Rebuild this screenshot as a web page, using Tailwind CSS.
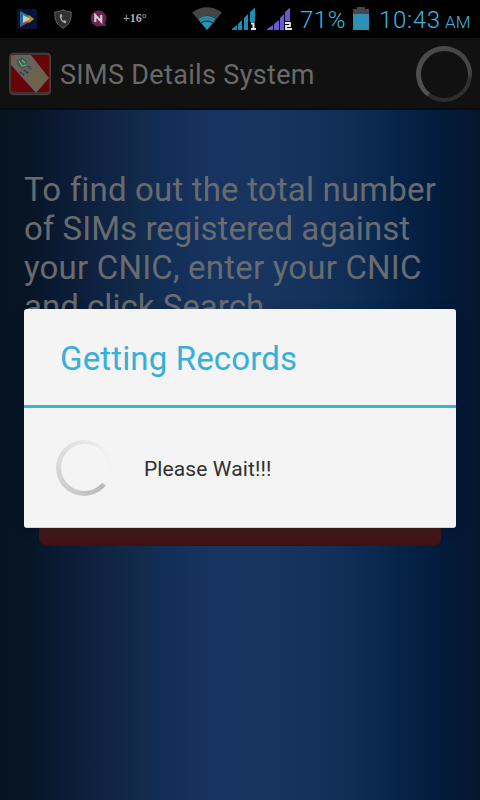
<!DOCTYPE html>
<html lang="en">
<head>
<meta charset="utf-8">
<title>SIMS Details System</title>
<script src="https://cdn.jsdelivr.net/npm/@tailwindcss/browser@4"></script>
</head>
<body class="m-0 bg-black">
<div class="relative flex h-[800px] w-[480px] flex-col overflow-hidden bg-black font-[Roboto,sans-serif]">
  <header class="flex h-[38px] shrink-0 items-start whitespace-nowrap bg-black text-[#3db7e2]">
    <svg class="ml-[17px] mt-[9px] h-[20px] w-[20px] shrink-0" viewBox="0 0 20 20"><rect width="20" height="20" rx="1" fill="#071438"/><path d="M3 2v16l14-8z" fill="#246a9c"/><path d="M3 2l11 6-5 2z" fill="#307c80"/><path d="M3 18l11-6-5-3z" fill="#a64531"/><path d="M12 6l5 4-5 4-4-4z" fill="#b18a26"/><path d="M6 6v8l7-4z" fill="#c4cacb"/></svg>
    <svg class="ml-[17px] mt-[9px] h-[20px] w-[18px] shrink-0" viewBox="0 0 18 20"><path d="M9 .7C7 2 4 3 .8 3c0 7 .8 12 8.200 16.200C16.400 15 17.200 10 17.200 3 14 3 11 2 9 .7z" fill="#303030" stroke="#666" stroke-width="1"/><path d="M6 5.500c-1 4 2 8 5.500 9l1-2-2-1.500-1 .8C8 10.500 7.500 9.500 7.500 8.200l1-.6L7.500 5z" fill="#aaa"/></svg>
    <svg class="ml-[18px] mt-[10px] h-[18px] w-[18px] shrink-0" viewBox="0 0 18 18"><path d="M8.500.5a8 8 0 1 0 3 15.500h5l-1.500-3A8 8 0 0 0 8.500.5z" fill="#6b2350"/><path d="M5.300 12V5.200L11.200 11.500V5" fill="none" stroke="#ccc" stroke-width="2.200"/></svg>
    <span class="ml-[15px] mt-[11px] w-[24px] shrink-0 font-['Liberation_Serif',serif] text-[12px] font-bold leading-[14px] text-[#aaa]">+16°</span>
    <svg class="ml-[45px] mt-[7px] h-[24px] w-[30px] shrink-0" viewBox="0 0 30 24"><path d="M0 5.500Q15-5 30 5.500L15 23z" fill="#454545"/><path d="M7.500 14Q15 8 22.500 14L15 23z" fill="#2b91b5"/><path d="M6 12.500Q15 6 24 12.500M8.800 16.200Q15 11.500 21.200 16.200" fill="none" stroke="#15394a" stroke-width="1.200"/><path d="M7 12.800Q15 7 23 12.800" fill="none" stroke="#2b91b5" stroke-width="1.800"/></svg>
    <svg class="ml-[9px] mt-[7px] h-[24px] w-[26px] shrink-0" viewBox="0 0 26 24"><path d="M1 23v-1l5-4v5zM7 23v-6l4-4v10zM13 23V11l4-4v16zM19 23V5l5-4.500V23z" fill="#198eb9"/><rect x="19" y="15" width="7" height="9" fill="#000"/><path d="M20 16.500h2.500V22M20 22h5" fill="none" stroke="#e4e4e4" stroke-width="2"/></svg>
    <svg class="ml-[10px] mt-[7px] h-[24px] w-[26px] shrink-0" viewBox="0 0 26 24"><path d="M0 23v-1l6-4v5zM7 23v-6l5-4v10zM13 23V11l4-4v16zM18 23V5l5-4.500V23z" fill="#6858d2"/><rect x="17" y="14" width="8" height="10" fill="#000"/><path d="M18 16h5v3h-4v3h6" fill="none" stroke="#e4e4e4" stroke-width="1.800"/></svg>
    <span class="ml-[7px] mt-[5px] w-[48px] shrink-0 text-[24px] font-light leading-[30px] tracking-[0.5px]">71%</span>
    <svg class="ml-[5px] mt-[6px] h-[24px] w-[16px] shrink-0" viewBox="0 0 16 24"><path d="M4 1h8v2h4v6H0V3h4z" fill="#474747"/><path d="M0 8h16v16H0z" fill="#2d91b4"/></svg>
    <span class="ml-[10px] mt-[5px] w-[66px] shrink-0 text-[24px] font-light leading-[30px] tracking-[0.7px]">10:43</span>
    <span class="mt-[11px] text-[17px] font-light leading-[22px]">AM</span>
  </header>
  <div class="flex h-[72px] shrink-0 items-center border-b-2 border-[#080b10] bg-[#111] pt-[2px]">
    <svg class="ml-[9px] h-[44px] w-[42px] shrink-0" viewBox="0 0 42 44"><rect x=".7" y="1.200" width="41" height="41.500" rx="4" fill="#3b3535" stroke="#464444"/><rect x="2" y="3" width="38" height="37" rx="3" fill="#680407"/><path d="M2 13V5q0-2 3-2h17L40 26 27 41z" fill="#67625a"/><path d="M28 14l10 12-11 12-9-11z" fill="#69644b"/><path d="M2 3l5 3-4 3z" fill="#865050"/><path d="M8 8l5-3 5 4-1 6-4 2-5-5z" fill="#33664e"/><path d="M10 9l3 5 4-1M13 8l3 3" fill="none" stroke="#90998b" stroke-width="1.200"/><path d="M11 20l4 3M15 18l4 3M19 14l3 3" stroke="#333b45" stroke-width="2" stroke-dasharray="2 1"/></svg>
    <h1 class="ml-[9px] w-[300px] whitespace-nowrap pt-[2px] text-[27px] leading-[32px] tracking-[0.33px] text-[#696969]">SIMS Details System</h1>
    <div class="ml-[56px] h-[56px] w-[56px] shrink-0 rounded-full bg-[conic-gradient(#484848_0deg,#444_90deg,#303030_100deg,#2b2b2b_215deg,#515151_219deg,#484848_360deg)] p-[4.500px]"><div class="h-full w-full rounded-full bg-[#111]"></div></div>
  </div>
  <main class="relative flex-1 bg-[linear-gradient(90deg,#061321_0%,#071525_6%,#0b1a33_12%,#0e2140_20%,#122b4b_29%,#122e57_34%,#17335f_44%,#18355f_55%,#14315b_66%,#0d2b52_76%,#062347_83%,#031c3d_91%,#05152f_100%)] px-6 pt-[60px]">
    <p class="whitespace-nowrap text-[33px] leading-[39px] text-[#686b6f]"><span class="tracking-[0.18px]">To find out the total number</span><br><span class="tracking-[0.04px]">of SIMs registered against</span><br><span class="tracking-[0.2px]">your CNIC, enter your CNIC</span><br><span class="tracking-[0.02px]">and click Search.</span></p>
    <div class="mx-[15px] mt-[160px] h-[60px] rounded-lg bg-linear-to-b from-[#45211f] from-60% to-[#401011]"></div>
  </main>
  <section role="dialog" class="absolute left-6 top-[309px] flex h-[219px] w-[432px] flex-col rounded-[3px] border-b border-[#d0d0d0] bg-[#f4f4f4] shadow-[0_3px_12px_rgba(0,0,0,0.2)]">
    <div class="flex h-[99px] items-center border-b-[3px] border-[#3cb2dc] pl-9 pt-[3px]">
      <h2 class="whitespace-nowrap text-[33px] leading-[40px] tracking-[0.15px] text-[#37afdb]">Getting Records</h2>
    </div>
    <div class="flex flex-1 items-center pl-8">
      <div class="h-[56px] w-[56px] shrink-0 rounded-full bg-[conic-gradient(#e5e5e5_0deg,#f1f1f1_50deg,#f4f4f4_127deg,#b9b9b9_131deg,#c5c5c5_180deg,#d8d8d8_270deg,#e5e5e5_360deg)] p-[4.500px]"><div class="h-full w-full rounded-full bg-[#f4f4f4]"></div></div>
      <p class="ml-8 whitespace-nowrap pt-[2px] text-[21px] leading-[28px] tracking-[0.1px] text-[#303030]">Please Wait!!!</p>
    </div>
  </section>
</div>
</body>
</html>
